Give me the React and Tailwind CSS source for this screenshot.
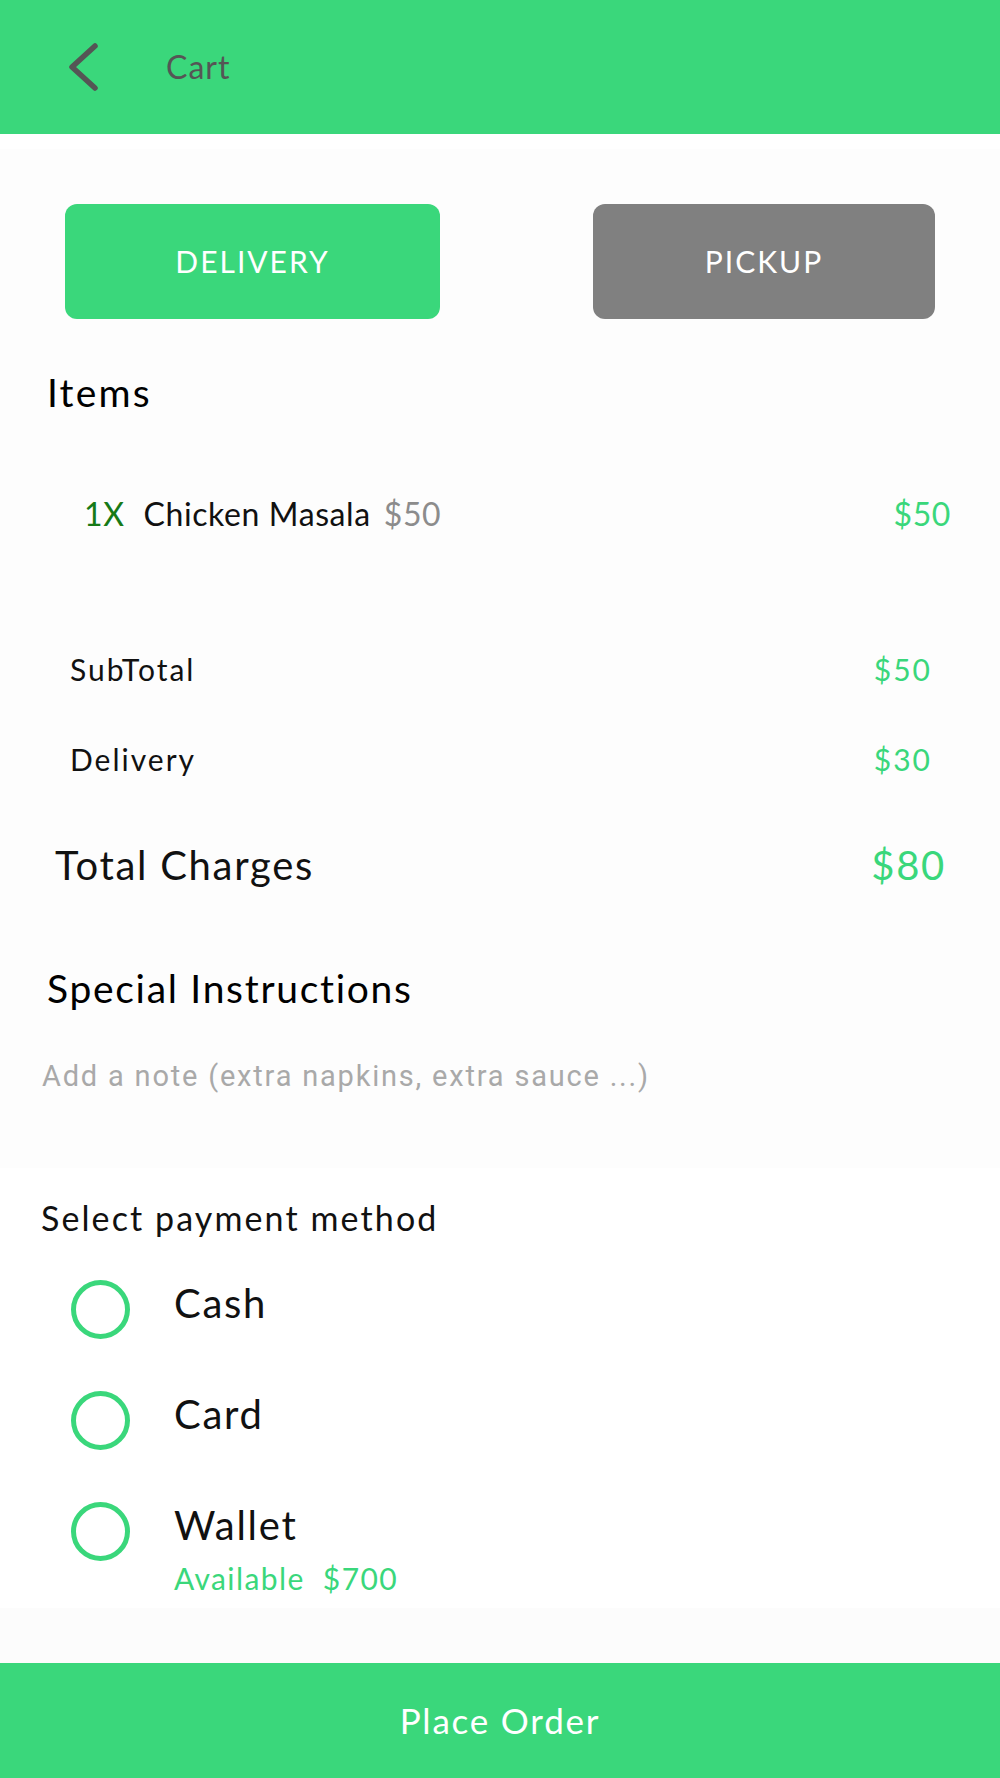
import React, { useState } from 'react';

const GREEN = 'bg-[#3ad77b]';

const Radio = ({ checked }) => (
  <div className="w-[59px] h-[59px] rounded-full border-[5px] border-[#3ad77b] flex items-center justify-center shrink-0">
    {checked && <div className="w-[29px] h-[29px] rounded-full bg-[#3ad77b]" />}
  </div>
);

const App = () => {
  const [mode, setMode] = useState('delivery');
  const [payment, setPayment] = useState(null);

  const methods = [
    { key: 'cash', label: 'Cash' },
    { key: 'card', label: 'Card' },
    { key: 'wallet', label: 'Wallet', extra: 'Available  $700' },
  ];

  return (
    <div className="w-[1000px] min-h-[1778px] bg-white font-['Lato',sans-serif] flex flex-col">
      {/* Header */}
      <div className={`h-[134px] ${GREEN} flex items-center pl-[67px]`}>
        <svg width="34" height="52" viewBox="0 0 34 52" fill="none">
          <polyline
            points="28,5 5,26 28,47"
            stroke="#555555"
            strokeWidth="5.5"
            strokeLinecap="round"
            strokeLinejoin="round"
          />
        </svg>
        <span className="ml-[65px] text-[32px] leading-none tracking-[1px] text-[#555555]">Cart</span>
      </div>
      <div className="h-[15px] bg-white" />

      {/* Order summary */}
      <div className="h-[1019px] bg-[#fdfdfd] flex flex-col">
        <div className="flex pl-[65px] mt-[55px]">
          <button
            onClick={() => setMode('delivery')}
            className={`w-[375px] h-[115px] rounded-[12px] text-white text-[30px] tracking-[2px] ${
              mode === 'delivery' ? GREEN : 'bg-[#808080]'
            }`}
          >
            DELIVERY
          </button>
          <button
            onClick={() => setMode('pickup')}
            className={`ml-[153px] w-[342px] h-[115px] rounded-[12px] text-white text-[30px] tracking-[2px] ${
              mode === 'pickup' ? GREEN : 'bg-[#808080]'
            }`}
          >
            PICKUP
          </button>
        </div>

        <div className="mt-[54px] pl-[47px] text-[39px] leading-none tracking-[2.2px] text-black">Items</div>

        <div className="mt-[86px] flex items-baseline pl-[84px] pr-[49px] text-[32px] leading-none tracking-[0.6px]">
          <span className="text-[#177a17]">1X</span>
          <span className="ml-[19px] text-[#111111]">Chicken Masala</span>
          <span className="ml-[13px] text-[#8c8c8c]">$50</span>
          <span className="ml-auto text-[#3ad77b]">$50</span>
        </div>

        <div className="mt-[124px] flex justify-between pl-[70px] pr-[68px] text-[30px] leading-none tracking-[2px]">
          <span className="text-[#111111]">SubTotal</span>
          <span className="text-[#3ad77b]">$50</span>
        </div>
        <div className="mt-[60px] flex justify-between pl-[70px] pr-[68px] text-[30px] leading-none tracking-[2px]">
          <span className="text-[#111111]">Delivery</span>
          <span className="text-[#3ad77b]">$30</span>
        </div>
        <div className="mt-[71px] flex justify-between pl-[55px] pr-[54px] text-[40px] leading-none tracking-[1.7px]">
          <span className="text-[#111111]">Total Charges</span>
          <span className="text-[#3ad77b]">$80</span>
        </div>

        <div className="mt-[84px] pl-[47px] text-[39px] leading-none tracking-[1.7px] text-black">
          Special Instructions
        </div>
        <p className="mt-[54px] pl-[42px] font-['Roboto',sans-serif] text-[29px] leading-none tracking-[1.8px] text-[#a9a9a9]">
          Add a note (extra napkins, extra sauce ...)
        </p>
      </div>

      {/* Payment */}
      <div className="h-[440px] bg-white flex flex-col">
        <div className="mt-[33px] pl-[41px] text-[34px] leading-none tracking-[2.1px] text-[#111111]">
          Select payment method
        </div>
        <div className="mt-[45px] pl-[71px] flex flex-col gap-[52px]">
          {methods.map((m) => (
            <div key={m.key} className="flex cursor-pointer" onClick={() => setPayment(m.key)}>
              <Radio checked={payment === m.key} />
              <div className="ml-[44px] mt-[3px] flex flex-col">
                <span className="text-[40px] leading-none tracking-[1.7px] text-[#111111]">{m.label}</span>
                {m.extra && (
                  <span className="mt-[18px] text-[30px] leading-none tracking-[1.4px] text-[#3ad77b] whitespace-pre">
                    {m.extra}
                  </span>
                )}
              </div>
            </div>
          ))}
        </div>
      </div>

      <div className="h-[55px] bg-[#fcfcfc]" />
      <button className={`h-[115px] ${GREEN} text-white text-[35px] leading-none tracking-[1.8px]`}>Place Order</button>
    </div>
  );
};

export default App;
